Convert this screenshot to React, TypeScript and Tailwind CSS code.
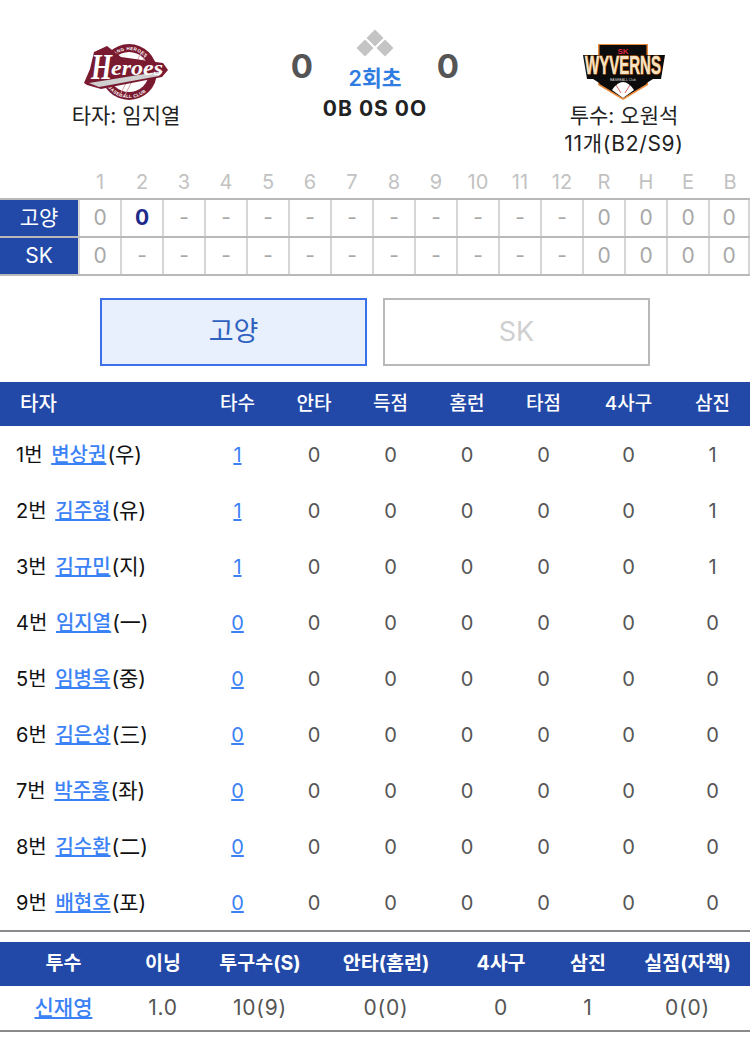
const font = { fontFamily: '"Inter", "Noto Sans CJK KR", sans-serif' };

const innings = ["1", "2", "3", "4", "5", "6", "7", "8", "9", "10", "11", "12", "R", "H", "E", "B"];
const home = ["0", "0", "-", "-", "-", "-", "-", "-", "-", "-", "-", "-", "0", "0", "0", "0"];
const away = ["0", "-", "-", "-", "-", "-", "-", "-", "-", "-", "-", "-", "0", "0", "0", "0"];

const batters = [
  { order: "1번", name: "변상권", pos: "(우)", ab: "1", so: "1" },
  { order: "2번", name: "김주형", pos: "(유)", ab: "1", so: "1" },
  { order: "3번", name: "김규민", pos: "(지)", ab: "1", so: "1" },
  { order: "4번", name: "임지열", pos: "(一)", ab: "0", so: "0" },
  { order: "5번", name: "임병욱", pos: "(중)", ab: "0", so: "0" },
  { order: "6번", name: "김은성", pos: "(三)", ab: "0", so: "0" },
  { order: "7번", name: "박주홍", pos: "(좌)", ab: "0", so: "0" },
  { order: "8번", name: "김수환", pos: "(二)", ab: "0", so: "0" },
  { order: "9번", name: "배현호", pos: "(포)", ab: "0", so: "0" },
];

const batCols = "grid grid-cols-[199px_77px_76px_77px_76px_77px_93px_75px]";
const pitchCols = "grid grid-cols-[127px_72px_122px_130px_100px_74px_125px]";

function HeroesLogo() {
  return (
    <svg width="86" height="58" viewBox="0 0 86 58">
      <defs>
        <path id="ringTop" d="M24 29 A22 22 0 0 1 68 29" />
        <path id="ringBottom" d="M20 29 A26 26 0 0 0 72 29" />
      </defs>
      <circle cx="46" cy="29" r="28" fill="#7a1a30" />
      <circle cx="46" cy="29" r="20" fill="#fff" />
      <path d="M58 10 L38 50 M62 13 L42 52" stroke="#d9a0a8" strokeWidth="1" />
      <text fontSize="4.500" fontWeight="700" fill="#fff" fontFamily="Liberation Sans, sans-serif" letterSpacing="0.4">
        <textPath href="#ringTop" startOffset="8">GOYANG HEROES</textPath>
      </text>
      <text fontSize="4.500" fontWeight="700" fill="#fff" fontFamily="Liberation Sans, sans-serif" letterSpacing="0.4">
        <textPath href="#ringBottom" startOffset="16">BASEBALL CLUB</textPath>
      </text>
      <path d="M1 40 L7 26 L11 9 L24 3 L38 14 L80 20 L85 27 L79 34 L18 46 L4 42 Z" fill="#7a1a30" />
      <path d="M6 40 L80 28 L76 33 L16 44 Z" fill="#cfcfcf" />
      <text x="8" y="36" fontSize="36" fontWeight="700" fontStyle="italic" fill="#fff" fontFamily="Liberation Serif, serif" textLength="21" lengthAdjust="spacingAndGlyphs">H</text>
      <text x="28" y="32" fontSize="22" fontWeight="700" fontStyle="italic" fill="#fff" fontFamily="Liberation Serif, serif" textLength="52" lengthAdjust="spacingAndGlyphs">eroes</text>
    </svg>
  );
}

function WyvernsLogo() {
  return (
    <svg width="82" height="58" viewBox="0 0 82 58">
      <path d="M15 1 L65 1 L65 42 L40 57 L15 42 Z" fill="#e98a3c" />
      <path d="M16.500 2 L63.500 2 L63.500 41 L40 55 L16.500 41 Z" fill="#0c0c0c" />
      <path d="M0 12 L82 12 L78 36 L70 36 L40 55 L10 36 L4 36 Z" fill="#0c0c0c" />
      <path d="M29 47 Q40 31 51 47 L40 55 Z" fill="#fff" />
      <path d="M33 42 L38 50 M47 42 L42 50" stroke="#d9606a" strokeWidth="1" />
      <text x="40" y="11" textAnchor="middle" fontSize="8" fontWeight="700" fill="#d8263c" fontFamily="Liberation Sans, sans-serif">SK</text>
      <g transform="translate(40 31) scale(0.6 1)">
        <text x="0" y="0" textAnchor="middle" fontSize="25" fontWeight="700" fill="#f6e3c4" stroke="#d9741f" strokeWidth="1.200" paintOrder="stroke" fontFamily="Liberation Sans, sans-serif">WYVERNS</text>
      </g>
      <text x="40" y="38" textAnchor="middle" fontSize="3.500" fill="#cfcfcf" fontFamily="Liberation Sans, sans-serif">BASEBALL Club</text>
    </svg>
  );
}

function ScoreRow({ team, cells, last }: { team: string; cells: string[]; last?: boolean }) {
  return (
    <div className={`flex border-t-2 border-[#b9b9b9] ${last ? "h-[40px] border-b-2" : "h-[38px]"}`}>
      <div className="flex w-[78px] shrink-0 items-center justify-center bg-[#2249a8] text-[21px] text-white">{team}</div>
      <div className="grid flex-1 grid-cols-16">
        {cells.map((c, i) => (
          <div
            key={i}
            className={`flex items-center justify-center border-l-2 border-[#d6d6d6] text-[21px] ${
              team === "고양" && i === 1 ? "font-bold text-[#1d2a8a]" : "text-[#a8a8a8]"
            } ${i === 15 ? "border-r-2" : ""}`}
          >
            {c}
          </div>
        ))}
      </div>
    </div>
  );
}

export default function App() {
  return (
    <div className="min-h-[1039px] w-[750px] bg-white" style={font}>
      {/* game header */}
      <div className="flex h-[166px] pt-[26px]">
        <div className="flex w-[252px] flex-col items-center pt-[17px]">
          <HeroesLogo />
          <div className="mt-[1px] text-[21px] leading-[28px] text-[#222]">타자: 임지열</div>
        </div>
        <div className="flex flex-1 justify-center">
          <div className="mt-[19px] w-[40px] text-center text-[33px] leading-[42px] font-bold text-[#555]">0</div>
          <div className="flex w-[106px] flex-col items-center">
            <div className="relative h-[32px] w-[40px]">
              <div className="absolute top-[6px] left-[14px] h-[12px] w-[12px] rotate-45 bg-[#c4c4c4]" />
              <div className="absolute top-[16px] left-[4px] h-[12px] w-[12px] rotate-45 bg-[#c4c4c4]" />
              <div className="absolute top-[16px] left-[24px] h-[12px] w-[12px] rotate-45 bg-[#c4c4c4]" />
            </div>
            <div className="mt-[7px] text-[21.5px] leading-[26px] font-semibold text-[#2f7de1]">2회초</div>
            <div className="mt-[5px] text-[21px] leading-[26px] font-bold tracking-[1px] whitespace-nowrap text-[#222]">0B 0S 0O</div>
          </div>
          <div className="mt-[19px] w-[40px] text-center text-[33px] leading-[42px] font-bold text-[#555]">0</div>
        </div>
        <div className="flex w-[252px] flex-col items-center pt-[17px]">
          <WyvernsLogo />
          <div className="mt-[1px] text-center text-[21px] leading-[28px] text-[#222]">
            투수: 오원석
            <br />
            <span className="tracking-[0.7px]">11개(B2/S9)</span>
          </div>
        </div>
      </div>

      {/* line score */}
      <div className="flex h-[32px] items-center">
        <div className="w-[78px]" />
        <div className="grid flex-1 grid-cols-16 text-center text-[20px] text-[#c2c2c2]">
          {innings.map((n) => (
            <div key={n} className="border-l-2 border-transparent">{n}</div>
          ))}
        </div>
      </div>
      <ScoreRow team="고양" cells={home} />
      <ScoreRow team="SK" cells={away} last />

      {/* team tabs */}
      <div className="mt-[22px] flex justify-center gap-[16px]">
        <div className="flex h-[68px] w-[267px] items-center justify-center border-2 border-[#3b70e8] bg-[#e8effd] text-[27px] text-[#2f62c0]">고양</div>
        <div className="flex h-[68px] w-[267px] items-center justify-center border-2 border-[#b9b9b9] text-[27px] text-[#cfcfcf]">SK</div>
      </div>

      {/* batters */}
      <div className={`${batCols} mt-[16px] h-[44px] items-center bg-[#2249a8] text-center text-[19px] font-medium text-white`}>
        <div className="pl-[20px] text-left text-[20px]">타자</div>
        {["타수", "안타", "득점", "홈런", "타점", "4사구", "삼진"].map((h) => (
          <div key={h}>{h}</div>
        ))}
      </div>
      {batters.map((b) => (
        <div key={b.order} className={`${batCols} h-[56px] items-center pt-[2px] text-center text-[20px] text-[#555]`}>
          <div className="pl-[16px] text-left whitespace-nowrap text-[#111]">
            {b.order} <a className="ml-[3px] font-medium text-[#3b82f6] underline">{b.name}</a>
            <span className="ml-[1px] text-[21px]">{b.pos}</span>
          </div>
          <a className="text-[#3b82f6] underline">{b.ab}</a>
          <div>0</div>
          <div>0</div>
          <div>0</div>
          <div>0</div>
          <div>0</div>
          <div>{b.so}</div>
        </div>
      ))}
      <div className="h-[2px] bg-[#8a8a8a]" />

      {/* pitchers */}
      <div className={`${pitchCols} mt-[10px] h-[44px] items-center bg-[#2249a8] text-center text-[19.5px] font-bold text-white`}>
        {["투수", "이닝", "투구수(S)", "안타(홈런)", "4사구", "삼진", "실점(자책)"].map((h) => (
          <div key={h}>{h}</div>
        ))}
      </div>
      <div className={`${pitchCols} h-[44px] items-center text-center text-[21px] tracking-[0.8px] text-[#555]`}>
        <a className="font-medium tracking-normal text-[#3b82f6] underline">신재영</a>
        <div>1.0</div>
        <div>10(9)</div>
        <div>0(0)</div>
        <div>0</div>
        <div>1</div>
        <div>0(0)</div>
      </div>
      <div className="h-[2px] bg-[#8a8a8a]" />
    </div>
  );
}
